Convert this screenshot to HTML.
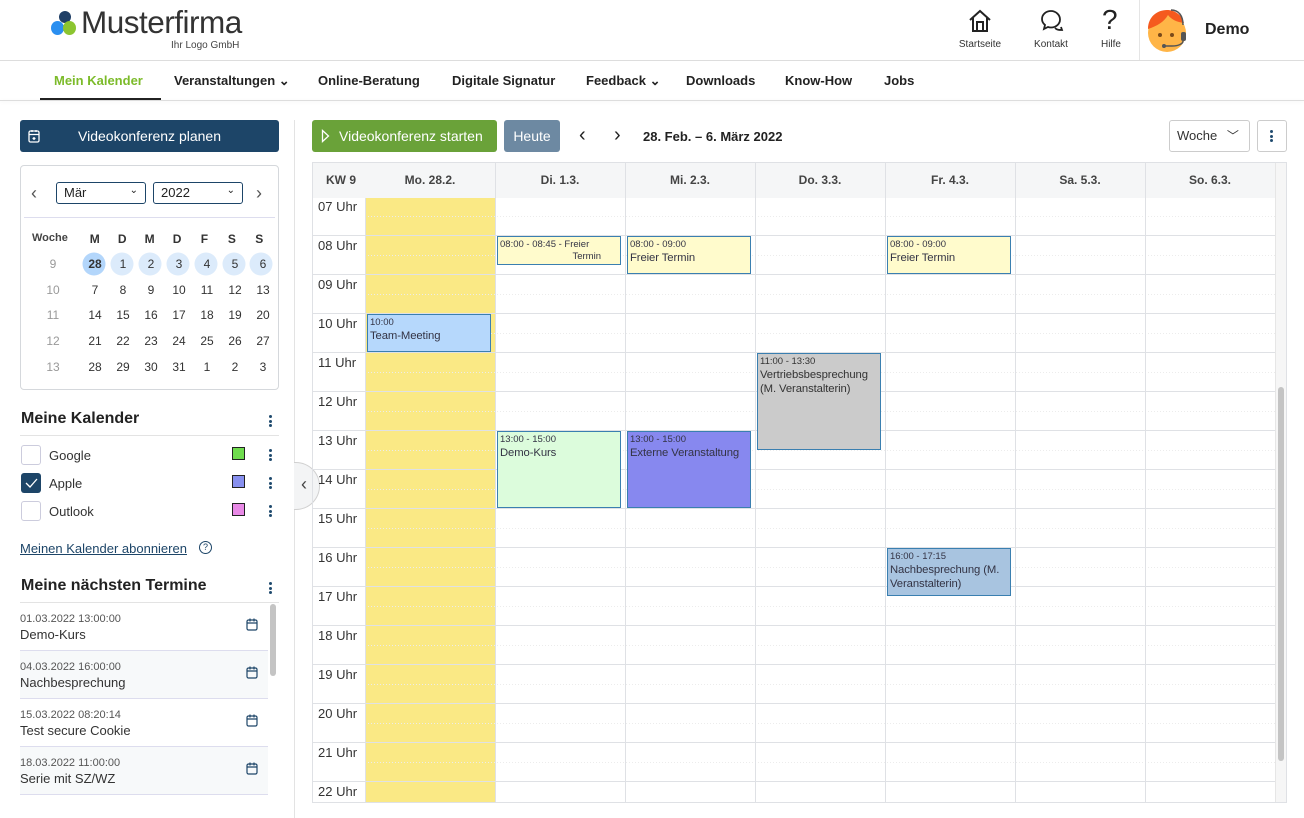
<!DOCTYPE html>
<html><head><meta charset="utf-8"><style>
*{box-sizing:border-box;margin:0;padding:0}
body{width:1304px;height:818px;overflow:hidden;background:#fff;font-family:"Liberation Sans",sans-serif;color:#222;position:relative}
.a{position:absolute}
.nav span{position:absolute;top:73px;font-size:13px;font-weight:bold;color:#222}
.ti{font-size:10px;color:#333;text-align:center;width:60px}
.cal td{text-align:center;font-size:12px;color:#333;height:25.7px;width:28px}
.ev{position:absolute;border:1px solid #3a7fb0;font-size:11.3px;letter-spacing:-0.1px;color:#334;padding:2px 1px 2px 2px;line-height:14px;overflow:hidden;white-space:normal}
.ev small{font-size:9.5px;display:block;line-height:12px;letter-spacing:0}
.hl{position:absolute;left:318px;font-size:13px;color:#333}
.dh{position:absolute;top:173px;font-size:12px;font-weight:bold;color:#444;text-align:center;width:130px}
.kal{position:absolute;left:20px;font-size:13px;color:#333}
.dots{position:absolute;width:3px}
.dots i{display:block;width:3px;height:3px;border-radius:50%;background:#1f4a6e;margin-bottom:1.5px}
.tr{position:absolute;left:20px;width:248px;height:48px;border-bottom:1px solid #dde;font-size:13px;color:#333}
.tr b{font-weight:normal;font-size:11px;color:#555;display:block;margin-top:10px;margin-bottom:2px}
</style></head><body>
<!-- header -->
<div class="a" style="left:59px;top:11px;width:12px;height:12px;border-radius:50%;background:#1f3f66"></div>
<div class="a" style="left:51px;top:21px;width:13px;height:14px;border-radius:50%;background:#2a8ff0"></div>
<div class="a" style="left:63px;top:21px;width:13px;height:14px;border-radius:50%;background:#8cc530"></div>
<div class="a" style="left:81px;top:4px;font-size:31.5px;color:#333;letter-spacing:-0.5px">Musterfirma</div>
<div class="a" style="left:171px;top:40px;font-size:10px;color:#444">Ihr Logo GmbH</div>
<svg class="a" style="left:967px;top:9px" width="26" height="24" viewBox="0 0 26 24" fill="none" stroke="#222" stroke-width="2"><path d="M3 11L13 2L23 11M6 9V22H20V9M10 22V13H16V22"/></svg>
<div class="a ti" style="left:950px;top:39px">Startseite</div>
<svg class="a" style="left:1039px;top:8px" width="26" height="26" viewBox="0 0 26 26" fill="none" stroke="#222" stroke-width="1.8"><path d="M12 3C7 3 3 6.5 3 11c0 2.5 1.2 4.5 3 6l-1 4 4-2c1 .4 2 .5 3 .5 5 0 9-3.5 9-8s-4-8.5-9-8.5z"/><path d="M16 20c2 2 4 2 7 2l-1-3"/></svg>
<div class="a ti" style="left:1021px;top:39px">Kontakt</div>
<div class="a" style="left:1102px;top:4px;font-size:28px;color:#222">?</div>
<div class="a ti" style="left:1081px;top:39px">Hilfe</div>
<div class="a" style="left:1139px;top:0;width:1px;height:60px;background:#e5e5e5"></div>
<svg class="a" style="left:1146px;top:7px" width="44" height="46" viewBox="0 0 44 46"><circle cx="21" cy="26" r="19" fill="#ffb547"/><path d="M2 22C2 10 11 3 21 3c8 0 15 5 17 13-8-1-13-4-16-8-4 7-11 11-20 14z" fill="#f55a1e"/><circle cx="14" cy="28" r="2" fill="#7a4a1a"/><circle cx="26" cy="28" r="2" fill="#7a4a1a"/><path d="M25 3c8 0 12 6 12 15" stroke="#555" stroke-width="1.5" fill="none"/><rect x="35" y="25" width="5" height="9" rx="2" fill="#555"/><path d="M37 34c0 3-5 5-11 5h-8" stroke="#555" stroke-width="1.5" fill="none"/><circle cx="18" cy="39" r="2" fill="#555"/></svg>
<div class="a" style="left:1205px;top:21px;font-size:16px;font-weight:bold;color:#222">Demo</div>
<div class="a" style="left:0;top:60px;width:1304px;height:1px;background:#ddd"></div>
<div class="nav">
<span style="left:54px;color:#7cbb2a">Mein Kalender</span>
<span style="left:174px">Veranstaltungen ⌄</span>
<span style="left:318px">Online-Beratung</span>
<span style="left:452px">Digitale Signatur</span>
<span style="left:586px">Feedback ⌄</span>
<span style="left:686px">Downloads</span>
<span style="left:785px">Know-How</span>
<span style="left:884px">Jobs</span>
</div>
<div class="a" style="left:40px;top:98px;width:121px;height:3px;background:#222"></div>
<div class="a" style="left:0;top:100px;width:1304px;height:1px;background:#ddd;box-shadow:0 1px 3px rgba(0,0,0,.08)"></div>

<!-- sidebar -->
<div class="a" style="left:20px;top:120px;width:259px;height:32px;background:#1d4568;border-radius:3px;color:#fff;font-size:14px;text-align:center;line-height:32px">Videokonferenz planen</div>
<svg class="a" style="left:28px;top:129px" width="12" height="14" viewBox="0 0 12 14" fill="none" stroke="#fff" stroke-width="1.3"><rect x="1" y="2" width="10" height="11" rx="1.5"/><path d="M1 5.5H11M4 1v2M8 1v2M6 8v3M4.5 9.5h3"/></svg>
<div class="a" style="left:20px;top:165px;width:259px;height:225px;border:1px solid #d5d8dc;border-radius:4px"></div>
<div class="a" style="left:31px;top:183px;font-size:18px;color:#555">‹</div>
<div class="a" style="left:256px;top:183px;font-size:18px;color:#555">›</div>
<div class="a" style="left:56px;top:182px;width:90px;height:22px;border:1px solid #1d4568;border-radius:3px;font-size:13px;padding:2px 7px">Mär<span style="float:right;font-size:10px">⌄</span></div>
<div class="a" style="left:153px;top:182px;width:90px;height:22px;border:1px solid #1d4568;border-radius:3px;font-size:13px;padding:2px 7px">2022<span style="float:right;font-size:10px">⌄</span></div>
<div class="a" style="left:24px;top:217px;width:251px;height:1px;background:#dde"></div>
<div class="a" style="left:32px;top:232px;font-size:11px;font-weight:bold;color:#444">Woche</div>
<div class="a" style="left:81px;top:226px;width:192px">
<table class="cal" style="border-collapse:collapse">
<tr style="font-weight:bold"><td><b>M</b></td><td><b>D</b></td><td><b>M</b></td><td><b>D</b></td><td><b>F</b></td><td><b>S</b></td><td><b>S</b></td></tr>
</table></div>
<svg class="a" style="left:82px;top:252px" width="192" height="24"><circle cx="12" cy="12" r="11.5" fill="#b3d6fb"/><circle cx="40" cy="12" r="11.5" fill="#dcebfb"/><circle cx="68" cy="12" r="11.5" fill="#dcebfb"/><circle cx="96" cy="12" r="11.5" fill="#dcebfb"/><circle cx="124" cy="12" r="11.5" fill="#dcebfb"/><circle cx="152" cy="12" r="11.5" fill="#dcebfb"/><circle cx="179" cy="12" r="11.5" fill="#dcebfb"/></svg>
<div class="a" style="left:38px;top:252px;font-size:12px;color:#999;line-height:25.7px;text-align:center;width:30px">9<br>10<br>11<br>12<br>13</div>
<div class="a" style="left:81px;top:251px">
<table class="cal" style="border-collapse:collapse">
<tr><td><b>28</b></td><td>1</td><td>2</td><td>3</td><td>4</td><td>5</td><td>6</td></tr>
<tr><td>7</td><td>8</td><td>9</td><td>10</td><td>11</td><td>12</td><td>13</td></tr>
<tr><td>14</td><td>15</td><td>16</td><td>17</td><td>18</td><td>19</td><td>20</td></tr>
<tr><td>21</td><td>22</td><td>23</td><td>24</td><td>25</td><td>26</td><td>27</td></tr>
<tr><td>28</td><td>29</td><td>30</td><td>31</td><td>1</td><td>2</td><td>3</td></tr>
</table></div>

<div class="a" style="left:21px;top:410px;font-size:16px;font-weight:bold;color:#222">Meine Kalender</div>
<div class="dots" style="left:269px;top:415px"><i></i><i></i><i></i></div>
<div class="a" style="left:20px;top:435px;width:259px;height:1px;background:#e3e3e3"></div>
<div class="a" style="left:21px;top:445px;width:20px;height:20px;border:1px solid #ccd;border-radius:3px"></div>
<div class="a" style="left:21px;top:473px;width:20px;height:20px;background:#1d4568;border-radius:3px"></div>
<svg class="a" style="left:24px;top:477px" width="14" height="12"><path d="M2 6l4 4 7-8" stroke="#fff" stroke-width="1.3" fill="none"/></svg>
<div class="a" style="left:21px;top:501px;width:20px;height:20px;border:1px solid #ccd;border-radius:3px"></div>
<div class="kal" style="left:49px;top:448px">Google</div>
<div class="kal" style="left:49px;top:476px">Apple</div>
<div class="kal" style="left:49px;top:504px">Outlook</div>
<div class="a" style="left:232px;top:447px;width:13px;height:13px;background:#6fdc4e;border:1px solid #222"></div>
<div class="a" style="left:232px;top:475px;width:13px;height:13px;background:#8890ef;border:1px solid #222"></div>
<div class="a" style="left:232px;top:503px;width:13px;height:13px;background:#e889e6;border:1px solid #222"></div>
<div class="dots" style="left:269px;top:449px"><i></i><i></i><i></i></div>
<div class="dots" style="left:269px;top:477px"><i></i><i></i><i></i></div>
<div class="dots" style="left:269px;top:505px"><i></i><i></i><i></i></div>
<div class="a" style="left:20px;top:541px;font-size:13px;color:#1d4568;text-decoration:underline">Meinen Kalender abonnieren</div>
<div class="a" style="left:199px;top:541px;width:13px;height:13px;border:1.3px solid #1d4568;border-radius:50%;font-size:9px;text-align:center;line-height:11px;color:#1d4568">?</div>
<div class="a" style="left:21px;top:577px;font-size:16px;font-weight:bold;color:#222">Meine nächsten Termine</div>
<div class="dots" style="left:269px;top:582px"><i></i><i></i><i></i></div>
<div class="a" style="left:20px;top:602px;width:259px;height:1px;background:#e3e3e3"></div>
<div class="tr" style="top:603px"><b>01.03.2022 13:00:00</b>Demo-Kurs</div>
<div class="tr" style="top:651px;background:#f7f9fa"><b>04.03.2022 16:00:00</b>Nachbesprechung</div>
<div class="tr" style="top:699px"><b>15.03.2022 08:20:14</b>Test secure Cookie</div>
<div class="tr" style="top:747px;background:#f7f9fa"><b>18.03.2022 11:00:00</b>Serie mit SZ/WZ</div>
<svg class="a" style="left:246px;top:618px" width="13" height="170" fill="none" stroke="#1d4568" stroke-width="1.2"><g id="ci"><rect x="1" y="2" width="10" height="10" rx="1.5"/><path d="M1 5H11M4 0.5v3M8 0.5v3"/></g><use href="#ci" y="48"/><use href="#ci" y="96"/><use href="#ci" y="144"/></svg>
<div class="a" style="left:270px;top:604px;width:6px;height:72px;background:#c4c4c4;border-radius:3px"></div>
<div class="a" style="left:294px;top:120px;width:1px;height:698px;background:#e3e3e3"></div>
<div class="a" style="left:294px;top:462px;width:26px;height:48px;background:#f3f4f5;border:1px solid #d0d0d0;border-left:none;border-radius:0 24px 24px 0"></div>
<div class="a" style="left:301px;top:474px;font-size:18px;color:#444">‹</div>

<!-- toolbar -->
<div class="a" style="left:312px;top:120px;width:185px;height:32px;background:#6aa239;border-radius:3px;color:#fff;font-size:14px;line-height:32px;padding-left:27px">Videokonferenz starten</div>
<svg class="a" style="left:321px;top:129px" width="9" height="14"><path d="M1.5 1.5L7.5 7 1.5 12.5z" stroke="#fff" stroke-width="1.3" fill="none"/></svg>
<div class="a" style="left:504px;top:120px;width:56px;height:32px;background:#6d89a2;border-radius:3px;color:#fff;font-size:14px;line-height:32px;text-align:center">Heute</div>
<div class="a" style="left:579px;top:124px;font-size:20px;color:#222">‹</div>
<div class="a" style="left:614px;top:124px;font-size:20px;color:#222">›</div>
<div class="a" style="left:643px;top:129px;font-size:13px;font-weight:bold;color:#222">28. Feb. – 6. März 2022</div>
<div class="a" style="left:1169px;top:120px;width:81px;height:32px;border:1px solid #ccc;border-radius:3px;font-size:13px;color:#333;line-height:30px;padding-left:7px">Woche <span style="font-size:12px;margin-left:6px">﹀</span></div>
<div class="a" style="left:1257px;top:120px;width:30px;height:32px;border:1px solid #ccc;border-radius:3px"></div>
<div class="dots" style="left:1270px;top:130px"><i></i><i></i><i></i></div>

<!-- calendar grid -->
<div class="a" style="left:312px;top:162px;width:975px;height:641px;border:1px solid #dfe1e5"></div>
<div class="a" style="left:313px;top:163px;width:962px;height:35px;background:#f5f6f7"></div>
<div class="a" style="left:1275px;top:163px;width:11px;height:639px;background:#f6f6f6;border-left:1px solid #e6e6e6"></div>
<div class="a" style="left:1278px;top:387px;width:6px;height:374px;background:#c4c4c4;border-radius:3px"></div>
<div class="a" style="left:365px;top:198px;width:130px;height:604px;background:#fae985"></div>
<div class="a" style="left:313px;top:197px;width:962px;height:605px;background:repeating-linear-gradient(to bottom,transparent 0,transparent 38px,#dfe1e5 38px,#dfe1e5 39px)"></div>
<svg class="a" style="left:365px;top:197px" width="910" height="605"><g stroke="#ececec" stroke-dasharray="1,2"><path d="M0 19.5H910M0 58.5H910M0 97.5H910M0 136.5H910M0 175.5H910M0 214.5H910M0 253.5H910M0 292.5H910M0 331.5H910M0 370.5H910M0 409.5H910M0 448.5H910M0 487.5H910M0 526.5H910M0 565.5H910"/></g></svg>
<svg class="a" style="left:312px;top:163px" width="963" height="640"><g stroke="#dfe1e5"><path d="M53.5 35V640M183.5 0V640M313.5 0V640M443.5 0V640M573.5 0V640M703.5 0V640M833.5 0V640"/></g></svg>
<div class="a" style="left:326px;top:173px;font-size:12px;font-weight:bold;color:#444">KW 9</div>
<div class="dh" style="left:365px">Mo. 28.2.</div>
<div class="dh" style="left:495px">Di. 1.3.</div>
<div class="dh" style="left:625px">Mi. 2.3.</div>
<div class="dh" style="left:755px">Do. 3.3.</div>
<div class="dh" style="left:885px">Fr. 4.3.</div>
<div class="dh" style="left:1015px">Sa. 5.3.</div>
<div class="dh" style="left:1145px">So. 6.3.</div>
<div class="hl" style="top:199px">07 Uhr</div>
<div class="hl" style="top:238px">08 Uhr</div>
<div class="hl" style="top:277px">09 Uhr</div>
<div class="hl" style="top:316px">10 Uhr</div>
<div class="hl" style="top:355px">11 Uhr</div>
<div class="hl" style="top:394px">12 Uhr</div>
<div class="hl" style="top:433px">13 Uhr</div>
<div class="hl" style="top:472px">14 Uhr</div>
<div class="hl" style="top:511px">15 Uhr</div>
<div class="hl" style="top:550px">16 Uhr</div>
<div class="hl" style="top:589px">17 Uhr</div>
<div class="hl" style="top:628px">18 Uhr</div>
<div class="hl" style="top:667px">19 Uhr</div>
<div class="hl" style="top:706px">20 Uhr</div>
<div class="hl" style="top:745px">21 Uhr</div>
<div class="hl" style="top:784px">22 Uhr</div>

<div class="ev" style="left:497px;top:236px;width:124px;height:29px;background:#fffbcc"><small>08:00 - 08:45 - Freier</small><small style="text-align:right;padding-right:18px">Termin</small></div>
<div class="ev" style="left:627px;top:236px;width:124px;height:38px;background:#fffbcc"><small>08:00 - 09:00</small>Freier Termin</div>
<div class="ev" style="left:887px;top:236px;width:124px;height:38px;background:#fffbcc"><small>08:00 - 09:00</small>Freier Termin</div>
<div class="ev" style="left:367px;top:314px;width:124px;height:38px;background:#b6d8fc"><small>10:00</small>Team-Meeting</div>
<div class="ev" style="left:757px;top:353px;width:124px;height:97px;background:#cbcbcb;color:#333"><small>11:00 - 13:30</small>Vertriebsbesprechung<br>(M. Veranstalterin)</div>
<div class="ev" style="left:497px;top:431px;width:124px;height:77px;background:#dcfcdc"><small>13:00 - 15:00</small>Demo-Kurs</div>
<div class="ev" style="left:627px;top:431px;width:124px;height:77px;background:#8788ef;white-space:nowrap"><small>13:00 - 15:00</small>Externe Veranstaltung</div>
<div class="ev" style="left:887px;top:548px;width:124px;height:48px;background:#a8c4e0"><small>16:00 - 17:15</small><span style="white-space:nowrap">Nachbesprechung (M.</span><br>Veranstalterin)</div>
</body></html>
